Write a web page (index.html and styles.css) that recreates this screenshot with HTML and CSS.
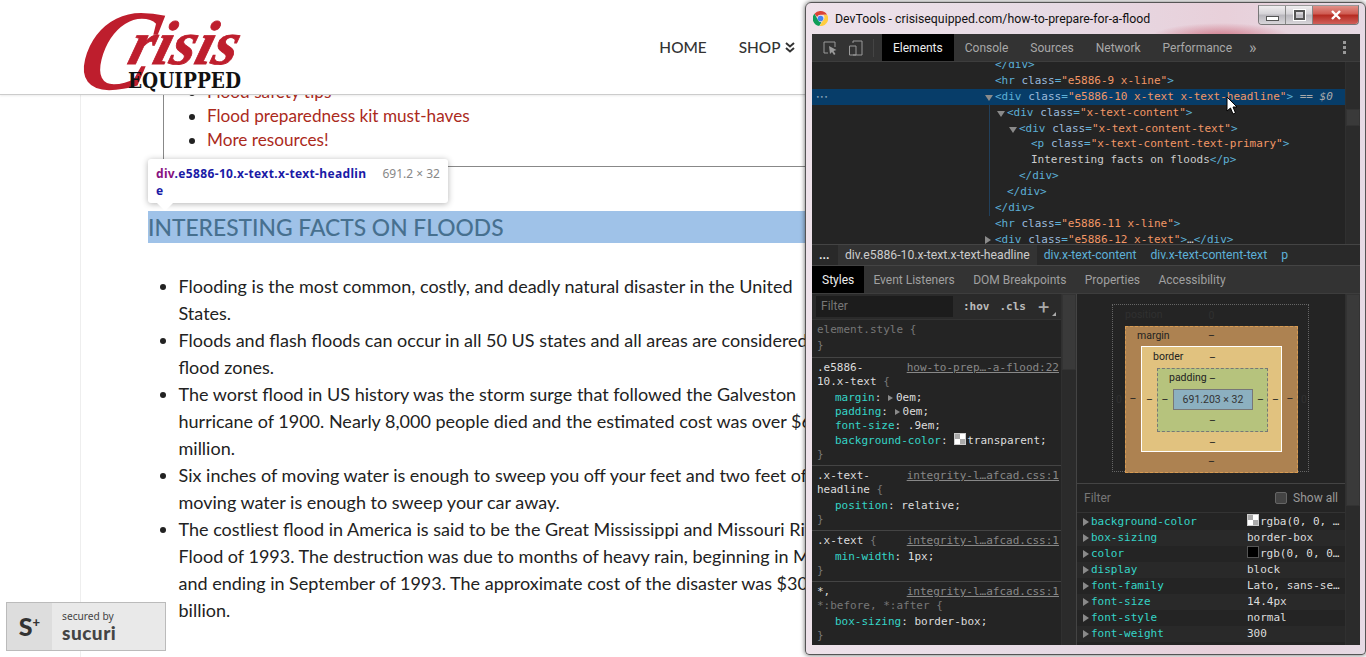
FILE: index.html
```html
<!DOCTYPE html>
<html lang="en">
<head>
  <meta charset="UTF-8">
  <title>How to prepare for a flood</title>
  <link rel="stylesheet" href="styles.css">
</head>
<body>

  <header class="site-header">
    <svg class="logo" viewBox="0 0 157 78" width="157" height="78" role="img" aria-label="Crisis Equipped">
      <text class="logo-c" transform="translate(-10 76) skewX(-14)" textLength="72" lengthAdjust="spacingAndGlyphs">C</text>
      <text class="logo-risis" transform="translate(42 51) skewX(-16)" textLength="108" lengthAdjust="spacingAndGlyphs">risis</text>
      <text class="logo-equipped" x="44" y="75" textLength="113" lengthAdjust="spacingAndGlyphs">EQUIPPED</text>
    </svg>
    <nav class="site-nav">
      <a href="#">HOME</a>
      <a href="#">SHOP
        <svg class="nav-chevrons" viewBox="0 0 10 11" width="10" height="11"><path d="M1 1l4 3.500L9 1M1 6l4 3.500L9 6" fill="none" stroke="#333" stroke-width="2"/></svg>
      </a>
    </nav>
  </header>

  <main class="page">
    <div class="toc">
      <ul>
        <li><a href="#">Flood safety tips</a></li>
        <li><a href="#">Flood preparedness kit must-haves</a></li>
        <li><a href="#">More resources!</a></li>
      </ul>
    </div>
    <h2 class="headline">Interesting facts on floods</h2>
    <ul class="facts">
      <li>Flooding is the most common, costly, and deadly natural disaster in the United States.</li>
      <li>Floods and flash floods can occur in all 50 US states and all areas are considered flood zones.</li>
      <li>The worst flood in US history was the storm surge that followed the Galveston hurricane of 1900. Nearly 8,000 people died and the estimated cost was over $6 million.</li>
      <li>Six inches of moving water is enough to sweep you off your feet and two feet of moving water is enough to sweep your car away.</li>
      <li>The costliest flood in America is said to be the Great Mississippi and Missouri River Flood of 1993. The destruction was due to months of heavy rain, beginning in May and ending in September of 1993. The approximate cost of the disaster was $30 billion.</li>
    </ul>
  </main>

  <div class="inspect-tip">
    <div class="tip-name"><span class="tip-tag">div</span>.e5886-10.x-text.x-text-headlin<br>e</div>
    <div class="tip-size">691.2 × 32</div>
  </div>

  <aside class="sucuri">
    <div class="sucuri-mark">S<sup>+</sup></div>
    <div class="sucuri-text">
      <span>secured by</span>
      <strong>sucuri</strong>
    </div>
  </aside>

  <section class="devtools">
    <div class="titlebar">
      <svg class="chrome-icon" viewBox="0 0 16 16" width="15" height="15">
        <path d="M8 0a8 8 0 0 1 7 4H8a4 4 0 0 0-3.700 2.400L1.600 2.900A8 8 0 0 1 8 0z" fill="#db4437"/>
        <path d="M1.600 2.900l3.600 6.300a3.800 3.800 0 0 0 3.800 2.700L6.600 16A8 8 0 0 1 1.600 2.900z" fill="#0f9d58"/>
        <path d="M15 4a8 8 0 0 1-8 12l3.600-5.800A4 4 0 0 0 11 4z" fill="#ffcd40"/>
        <circle cx="8" cy="8" r="3" fill="#4285f4"/>
      </svg>
      <span class="title-text">DevTools - crisisequipped.com/how-to-prepare-for-a-flood</span>
      <div class="win-buttons">
        <div class="win-btn"><span class="glyph-min"></span></div>
        <div class="win-btn"><span class="glyph-max"></span></div>
        <div class="win-btn win-close">
          <svg viewBox="0 0 12 10" width="12" height="10"><path d="M2 1l8 8M10 1L2 9" stroke="#fff" stroke-width="2.400"/></svg>
        </div>
      </div>
    </div>

    <div class="dt-panel">
      <div class="dt-toolbar">
        <svg class="tool-icon" viewBox="0 0 16 16" width="16" height="16">
          <path d="M6 13H2V2h11v5" fill="none" stroke="#9a9a9a" stroke-width="1"/>
          <path d="M7 6l7.500 4-3 1 2 3-1.500 1-2-3-2 2z" fill="#9a9a9a"/>
        </svg>
        <svg class="tool-icon" viewBox="0 0 16 16" width="16" height="16">
          <path d="M5 3V1h9v14H5M1.500 6h6.500v9H1.500z" fill="none" stroke="#9a9a9a" stroke-width="1"/>
        </svg>
        <div class="toolbar-sep"></div>
        <a class="dt-tab active">Elements</a>
        <a class="dt-tab">Console</a>
        <a class="dt-tab">Sources</a>
        <a class="dt-tab">Network</a>
        <a class="dt-tab">Performance</a>
        <span class="more-tabs">»</span>
        <div class="kebab"><i></i><i></i><i></i></div>
      </div>

      <div class="elements">
        <div class="dom-tree">
          <div class="dom-row in-0"><span class="t">&lt;/div&gt;</span></div>
          <div class="dom-row in-0"><span class="t">&lt;hr</span> <span class="a">class</span><span class="t">=</span><span class="v">"e5886-9 x-line"</span><span class="t">&gt;</span></div>
          <div class="dom-row in-0 selected"><span class="dots">•••</span><span class="tri open"></span><span class="t">&lt;div</span> <span class="a">class</span><span class="t">=</span><span class="v">"e5886-10 x-text x-text-headline"</span><span class="t">&gt;</span> <em class="dollar">== $0</em></div>
          <div class="dom-row in-1"><span class="tri open"></span><span class="t">&lt;div</span> <span class="a">class</span><span class="t">=</span><span class="v">"x-text-content"</span><span class="t">&gt;</span></div>
          <div class="dom-row in-2"><span class="tri open"></span><span class="t">&lt;div</span> <span class="a">class</span><span class="t">=</span><span class="v">"x-text-content-text"</span><span class="t">&gt;</span></div>
          <div class="dom-row in-3"><span class="t">&lt;p</span> <span class="a">class</span><span class="t">=</span><span class="v">"x-text-content-text-primary"</span><span class="t">&gt;</span></div>
          <div class="dom-row in-3">Interesting facts on floods<span class="t">&lt;/p&gt;</span></div>
          <div class="dom-row in-2"><span class="t">&lt;/div&gt;</span></div>
          <div class="dom-row in-1"><span class="t">&lt;/div&gt;</span></div>
          <div class="dom-row in-0"><span class="t">&lt;/div&gt;</span></div>
          <div class="dom-row in-0"><span class="t">&lt;hr</span> <span class="a">class</span><span class="t">=</span><span class="v">"e5886-11 x-line"</span><span class="t">&gt;</span></div>
          <div class="dom-row in-0"><span class="tri"></span><span class="t">&lt;div</span> <span class="a">class</span><span class="t">=</span><span class="v">"e5886-12 x-text"</span><span class="t">&gt;</span>…<span class="t">&lt;/div&gt;</span></div>
          <div class="guide"></div>
        </div>
        <div class="scrollbar"><div class="thumb thumb-dom"></div></div>
      </div>

      <div class="crumbs">
        <span class="crumb-more">...</span>
        <span class="crumb current">div.e5886-10.x-text.x-text-headline</span>
        <span class="crumb">div.x-text-content</span>
        <span class="crumb">div.x-text-content-text</span>
        <span class="crumb">p</span>
      </div>

      <div class="sub-tabs">
        <a class="sub-tab active">Styles</a>
        <a class="sub-tab">Event Listeners</a>
        <a class="sub-tab">DOM Breakpoints</a>
        <a class="sub-tab">Properties</a>
        <a class="sub-tab">Accessibility</a>
      </div>

      <div class="panes">
        <div class="styles-pane">
          <div class="styles-main">
            <div class="styles-filter">
              <div class="filter-input">Filter</div>
              <span class="filter-btn">:hov</span>
              <span class="filter-btn">.cls</span>
              <span class="filter-plus">+</span>
            </div>
            <div class="rule rule-first">
              <div class="sel dim">element.style {</div>
              <div class="dim">}</div>
            </div>
            <div class="rule">
              <div class="sel"><a class="src">how-to-prep…-a-flood:22</a>.e5886-<br>10.x-text <span class="dim">{</span></div>
              <div class="decl"><span class="p">margin</span>: <span class="tri small"></span>0em;</div>
              <div class="decl"><span class="p">padding</span>: <span class="tri small"></span>0em;</div>
              <div class="decl"><span class="p">font-size</span>: .9em;</div>
              <div class="decl"><span class="p">background-color</span>: <span class="swatch checker"></span>transparent;</div>
              <div class="dim">}</div>
            </div>
            <div class="rule">
              <div class="sel"><a class="src">integrity-l…afcad.css:1</a>.x-text-<br>headline <span class="dim">{</span></div>
              <div class="decl"><span class="p">position</span>: relative;</div>
              <div class="dim">}</div>
            </div>
            <div class="rule">
              <div class="sel"><a class="src">integrity-l…afcad.css:1</a>.x-text <span class="dim">{</span></div>
              <div class="decl"><span class="p">min-width</span>: 1px;</div>
              <div class="dim">}</div>
            </div>
            <div class="rule">
              <div class="sel"><a class="src">integrity-l…afcad.css:1</a>*,<br><span class="dim">*:before, *:after {</span></div>
              <div class="decl"><span class="p">box-sizing</span>: border-box;</div>
              <div class="dim">}</div>
            </div>
          </div>
          <div class="scrollbar"><div class="thumb thumb-styles"></div></div>
        </div>

        <div class="computed-pane">
          <div class="computed-main">
            <div class="box-area">
              <div class="bm bm-position">
                <span class="bm-label">position</span><span class="top">0</span>
                <span class="left">0</span>
                <div class="bm bm-margin">
                  <span class="bm-label">margin</span><span class="top">–</span>
                  <span class="left">–</span>
                  <div class="bm bm-border">
                    <span class="bm-label">border</span><span class="top">–</span>
                    <span class="left">–</span>
                    <div class="bm bm-padding">
                      <span class="bm-label">padding</span><span class="top">–</span>
                      <span class="left">–</span>
                      <div class="bm-content">691.203 × 32</div>
                      <span class="right">–</span>
                      <span class="bottom">–</span>
                    </div>
                    <span class="right">–</span>
                    <span class="bottom">–</span>
                  </div>
                  <span class="right">–</span>
                  <span class="bottom">–</span>
                </div>
                <span class="right">0</span>
              </div>
            </div>
            <div class="computed-filter">
              <span class="computed-filter-label">Filter</span>
              <span class="checkbox"></span>
              <span class="show-all">Show all</span>
            </div>
            <div class="computed-list">
              <div class="c-row"><span class="c-name"><span class="tri"></span>background-color</span><span class="c-val"><span class="swatch checker"></span>rgba(0, 0, …</span></div>
              <div class="c-row"><span class="c-name"><span class="tri"></span>box-sizing</span><span class="c-val">border-box</span></div>
              <div class="c-row"><span class="c-name"><span class="tri"></span>color</span><span class="c-val"><span class="swatch black"></span>rgb(0, 0, 0…</span></div>
              <div class="c-row"><span class="c-name"><span class="tri"></span>display</span><span class="c-val">block</span></div>
              <div class="c-row"><span class="c-name"><span class="tri"></span>font-family</span><span class="c-val">Lato, sans-se…</span></div>
              <div class="c-row"><span class="c-name"><span class="tri"></span>font-size</span><span class="c-val">14.4px</span></div>
              <div class="c-row"><span class="c-name"><span class="tri"></span>font-style</span><span class="c-val">normal</span></div>
              <div class="c-row"><span class="c-name"><span class="tri"></span>font-weight</span><span class="c-val">300</span></div>
              <div class="c-row"><span class="c-name"><span class="tri"></span>height</span><span class="c-val">32px</span></div>
            </div>
          </div>
          <div class="scrollbar"><div class="thumb thumb-computed"></div></div>
        </div>
      </div>
    </div>

    <svg class="cursor" viewBox="0 0 12 19" width="12" height="19">
      <path d="M1 1v14l3.500-3 2.500 6 2.500-1-2.500-6H11z" fill="#fff" stroke="#000" stroke-width="1"/>
    </svg>
  </section>

</body>
</html>
```

FILE: styles.css
```css
html, body {
  margin: 0;
  padding: 0;
  height: 657px;
  overflow: hidden;
  background: #fff;
}

body {
  font-family: Lato, sans-serif;
  color: #222;
}

/* site header */
.site-header {
  position: absolute;
  top: 0;
  left: 0;
  right: 0;
  height: 95px;
  box-sizing: border-box;
  padding: 13px 571px 0 84px;
  display: flex;
  justify-content: space-between;
  align-items: flex-start;
  background: #fff;
  border-bottom: 1px solid #ccc;
  box-shadow: 0 1px 2px rgba(0, 0, 0, 0.08);
  z-index: 2;
}

.logo {
  display: block;
  overflow: visible;
}

.logo-c {
  font: italic bold 115px "Liberation Serif", serif;
  fill: #be1e2d;
}

.logo-risis {
  font: italic bold 62px "Liberation Serif", serif;
  fill: #be1e2d;
  stroke: #be1e2d;
  stroke-width: 0.8px;
}

.logo-equipped {
  font: bold 22px "DejaVu Serif", serif;
  fill: #111;
}

.site-nav {
  display: flex;
  gap: 32px;
  padding-top: 25px;
  font-size: 15.400px;
  font-weight: 500;
  line-height: 18px;
}

.site-nav a {
  color: #333;
  text-decoration: none;
  white-space: nowrap;
}

.nav-chevrons {
  margin-left: 1px;
}

/* article */
.page {
  margin-left: 80px;
  height: 657px;
  box-sizing: border-box;
  padding: 80px 0 0 67px;
  border-left: 1px solid #eee;
  width: 760px;
  font-size: 18px;
}

.toc {
  margin-left: 15px;
  height: 86px;
  border-left: 1px solid #888;
  border-bottom: 1px solid #888;
}

.toc ul {
  margin: 0;
  padding-left: 43px;
  line-height: 24px;
  font-size: 17.200px;
}

.toc a {
  color: #ab2a1c;
  text-decoration: none;
}

.headline {
  margin: 44px 0 0;
  height: 32px;
  line-height: 32px;
  font-size: 22.800px;
  font-weight: 500;
  text-transform: uppercase;
  color: #47708f;
  background: #9fc2e8;
}

.facts {
  margin: 30px 0 0;
  padding-left: 30.500px;
  line-height: 27px;
  color: #222;
  width: 660.500px;
}

/* element highlight tooltip */
.inspect-tip {
  position: absolute;
  left: 148px;
  top: 159px;
  width: 300px;
  height: 44px;
  box-sizing: border-box;
  padding: 6px 8px;
  display: flex;
  justify-content: space-between;
  background: #fff;
  border-radius: 3px;
  box-shadow: 0 1px 6px rgba(0, 0, 0, 0.3);
  font: 12px/17px "Noto Sans", sans-serif;
  z-index: 1;
}

.inspect-tip::after {
  content: "";
  position: absolute;
  left: 9px;
  top: 44px;
  border-left: 8px solid transparent;
  border-right: 8px solid transparent;
  border-top: 8px solid #fff;
}

.tip-name {
  font-weight: 700;
  color: #1a1aa6;
  letter-spacing: 0.350px;
  white-space: nowrap;
}

.tip-tag {
  color: #881280;
}

.tip-size {
  color: #888;
}

/* sucuri badge */
.sucuri {
  position: absolute;
  left: 6px;
  top: 602px;
  width: 160px;
  height: 49px;
  box-sizing: border-box;
  display: flex;
  background: #e9e9e9;
  border: 1px solid #bbb;
  z-index: 1;
}

.sucuri-mark {
  width: 45px;
  background: #ddd;
  font: 900 25px/47px Lato, sans-serif;
  color: #333;
  text-align: center;
}

.sucuri-mark sup {
  font-size: 13px;
  line-height: 0;
  vertical-align: 9px;
}

.sucuri-text {
  padding: 6px 0 0 10px;
  display: flex;
  flex-direction: column;
  color: #444;
}

.sucuri-text span {
  font: 10.200px/14px "Noto Sans", sans-serif;
}

.sucuri-text strong {
  font: 900 19px/20px Lato, sans-serif;
  letter-spacing: 0.500px;
}

/* devtools window */
.devtools {
  position: absolute;
  left: 805px;
  top: 2px;
  width: 561px;
  height: 653px;
  box-sizing: border-box;
  padding: 31px 5px 9px 6px;
  display: flex;
  flex-direction: column;
  border: 1px solid #555;
  border-radius: 6px 6px 4px 4px;
  background:
    radial-gradient(ellipse 70px 14px at 415px 34px, rgba(190, 60, 80, 0.6), transparent),
    linear-gradient(90deg, #eee2ea 0%, #e6dae4 45%, #e8d0da 75%, #e6dae4 100%);
  box-shadow: 0 0 5px rgba(0, 0, 0, 0.6);
  z-index: 3;
  font: 12px Roboto, sans-serif;
}

.titlebar {
  position: absolute;
  left: 0;
  right: 0;
  top: 0;
  height: 31px;
  display: flex;
  align-items: center;
  padding-left: 7px;
}

.chrome-icon {
  margin: 0 7px 0 0;
}

.title-text {
  color: #111;
  font-size: 12.300px;
  white-space: nowrap;
}

.win-buttons {
  position: absolute;
  right: 6px;
  top: 2px;
  display: flex;
  border: 1px solid #777;
  border-top: 1px solid #999;
  border-radius: 0 0 4px 4px;
  overflow: hidden;
}

.win-btn {
  width: 27px;
  height: 18px;
  display: flex;
  align-items: center;
  justify-content: center;
  background: linear-gradient(#f0eef0, #d4d2d6 45%, #b8b6bc 50%, #d8d6da);
  border-right: 1px solid #888;
  box-sizing: border-box;
}

.win-close {
  width: 45px;
  border-right: 0;
  background: linear-gradient(#e09088, #cf5a50 45%, #b52a20 50%, #d0605a);
}

.glyph-min {
  width: 11px;
  height: 3px;
  margin-top: 6px;
  background: #fff;
  border: 1px solid #555;
}

.glyph-max {
  width: 7px;
  height: 6px;
  border: 2px solid #555;
  outline: 1px solid #fff;
}

.dt-panel {
  flex: 1;
  min-height: 0;
  display: flex;
  flex-direction: column;
  background: #242424;
  color: #ccc;
  overflow: hidden;
}

.dt-toolbar {
  height: 28px;
  flex: none;
  display: flex;
  align-items: center;
  background: #333;
  border-bottom: 1px solid #3d3d3d;
  box-sizing: border-box;
}

.tool-icon {
  margin-left: 10px;
  flex: none;
}

.tool-icon + .tool-icon {
  margin-left: 10px;
}

.toolbar-sep {
  width: 1px;
  height: 18px;
  margin: 0 8px 0 9px;
  background: #444;
}

.dt-tab {
  height: 27px;
  line-height: 29px;
  padding: 0 11px;
  color: #a8a8a8;
}

.dt-tab.active {
  background: #000;
  color: #eee;
  padding: 0 11px;
}

.more-tabs {
  margin-left: 6px;
  color: #aaa;
  font-size: 16px;
  line-height: 22px;
}

.kebab {
  margin-left: auto;
  margin-right: 14px;
  display: flex;
  flex-direction: column;
  gap: 2px;
}

.kebab i {
  display: block;
  width: 3px;
  height: 3px;
  background: #999;
}

.elements {
  flex: none;
  height: 182px;
  display: flex;
  overflow: hidden;
}

.dom-tree {
  flex: 1;
  position: relative;
  margin-top: -5px;
  font: 11px/15.900px "DejaVu Sans Mono", monospace;
  color: #ccc;
}

.dom-row {
  position: relative;
  height: 15.900px;
  white-space: pre;
}

.dom-row.selected {
  background: #073d69;
}

.in-0 { padding-left: 183px; }
.in-1 { padding-left: 195px; }
.in-2 { padding-left: 207px; }
.in-3 { padding-left: 219px; }

.dots {
  position: absolute;
  left: 4px;
  top: 0;
  font-size: 6px;
  color: #8fa8bd;
  letter-spacing: 0.500px;
}

.t { color: #5db0d7; }
.a { color: #9bbbdc; }
.v { color: #f29766; }

.dollar {
  color: #aaa;
}

.guide {
  position: absolute;
  left: 177px;
  top: 48px;
  width: 1px;
  height: 111px;
  background: #21405c;
}

.tri {
  position: absolute;
  margin-left: -10px;
  margin-top: 4px;
  border-top: 4px solid transparent;
  border-bottom: 4px solid transparent;
  border-left: 6px solid #8a8a8a;
}

.tri.open {
  margin-top: 6px;
  border-left: 4px solid transparent;
  border-right: 4px solid transparent;
  border-top: 6px solid #8a8a8a;
  border-bottom: 0;
}

.tri.small {
  position: static;
  display: inline-block;
  margin: 0 3px 0 0;
  border-top-width: 3.500px;
  border-bottom-width: 3.500px;
  border-left-width: 5px;
}

.scrollbar {
  flex: none;
  width: 15px;
  background: #2b2b2b;
  border-left: 1px solid #303030;
  box-sizing: border-box;
}

.thumb {
  background: #3a3a3a;
  border: 1px solid #333;
  box-sizing: border-box;
}

.thumb-dom { height: 17px; margin-top: 47px; }
.thumb-styles { height: 76px; }
.thumb-computed { height: 212px; }

.crumbs {
  flex: none;
  height: 22px;
  display: flex;
  align-items: center;
  background: #292929;
  border-top: 1px solid #444;
  border-bottom: 1px solid #444;
  box-sizing: border-box;
  color: #5db0d7;
  font-size: 12.200px;
  line-height: 20px;
  white-space: nowrap;
}

.crumb-more {
  width: 26px;
  padding-left: 7px;
  box-sizing: border-box;
  color: #eee;
  font-weight: 700;
}

.crumb {
  padding: 0 7px;
}

.crumb.current {
  background: #333;
  color: #ccc;
}

.sub-tabs {
  flex: none;
  height: 28px;
  display: flex;
  background: #333;
  border-bottom: 1px solid #3d3d3d;
  box-sizing: border-box;
}

.sub-tab {
  line-height: 29px;
  padding: 0 9.200px;
  color: #a0a0a0;
}

.sub-tab.active {
  background: #000;
  color: #eee;
  padding: 0 10px;
}

.panes {
  flex: 1;
  min-height: 0;
  display: flex;
}

.styles-pane {
  width: 264px;
  display: flex;
  overflow: hidden;
  border-right: 1px solid #444;
  box-sizing: content-box;
}

.styles-main {
  flex: 1;
  min-width: 0;
  font: 11px/14px "DejaVu Sans Mono", monospace;
  color: #ddd;
}

.styles-filter {
  height: 26px;
  display: flex;
  align-items: center;
  background: #2a2a2a;
  border-bottom: 1px solid #333;
  box-sizing: border-box;
  padding-left: 4px;
}

.filter-input {
  width: 137px;
  height: 21px;
  padding-left: 5px;
  box-sizing: border-box;
  background: #1c1c1c;
  color: #777;
  font: 12px/21px Roboto, sans-serif;
}

.filter-btn {
  margin-left: 10px;
  color: #bbb;
  font-weight: 700;
}

.filter-plus {
  position: relative;
  margin-left: 12px;
  color: #aaa;
  font: 20px/20px Roboto, sans-serif;
}

.filter-plus::after {
  content: "";
  position: absolute;
  left: 14px;
  top: 15px;
  border-left: 4px solid transparent;
  border-bottom: 4px solid #aaa;
}

.rule {
  padding: 3px 2px 3px 5px;
  border-bottom: 1px solid #444;
}

.rule-first {
  padding-bottom: 4px;
}

.sel {
  margin-bottom: 2px;
}

.decl {
  padding-left: 18px;
  white-space: nowrap;
}

.dim {
  color: #777;
}

.p {
  color: #35d4c7;
}

.src {
  float: right;
  color: #888;
  text-decoration: underline;
}

.swatch {
  display: inline-block;
  width: 10px;
  height: 10px;
  margin-right: 1px;
  border: 1px solid #ccc;
  vertical-align: -1px;
}

.swatch.checker {
  background: conic-gradient(#fff 25%, #aaa 0 50%, #fff 0 75%, #aaa 0);
  background-size: 10px 10px;
}

.swatch.black {
  background: #000;
  border-color: #555;
}

.computed-pane {
  position: relative;
  flex: 1;
  min-width: 0;
  display: flex;
  overflow: hidden;
}

.computed-main {
  flex: 1;
  min-width: 0;
}

.box-area {
  height: 190px;
  box-sizing: border-box;
  padding: 10px 0 0 35px;
  border-bottom: 1px solid #444;
  font: 10.500px/14px Roboto, sans-serif;
}

.bm {
  position: relative;
  display: grid;
  box-sizing: border-box;
  color: #222;
  text-align: center;
}

.bm > span {
  align-self: center;
}

.bm > .top,
.bm > .bottom {
  grid-column: 1 / 4;
}

.bm-label {
  position: absolute;
  left: 12px;
  top: 3px;
}

.bm-position {
  width: 197px;
  height: 168px;
  grid-template-columns: 12px 173px 12px;
  grid-template-rows: 21px 147px;
  border: 1px dotted #666;
  color: #303030;
}

.bm-margin {
  grid-template-columns: 16px 141px 16px;
  grid-template-rows: 20px 106px 20px;
  background: #ad8251;
  outline: 1px dashed #d89b52;
  outline-offset: -1px;
}

.bm-border {
  grid-template-columns: 15px 111px 15px;
  grid-template-rows: 21px 64px 21px;
  background: #e1c27f;
  border: 1px solid #fff;
}

.bm-padding {
  grid-template-columns: 16px 80px 15px;
  grid-template-rows: 21px 21px 22px;
  background: #b6c37d;
  outline: 1px dashed #777;
  outline-offset: -1px;
}

.bm-border > .bm-label { left: 11px; }
.bm-padding > .bm-label { left: 12px; }

.bm-content {
  background: #8cb0c0;
  border: 1px solid #777;
  box-sizing: border-box;
  line-height: 19px;
  color: #333;
  white-space: nowrap;
}

.computed-filter {
  height: 29px;
  display: flex;
  align-items: center;
  border-bottom: 1px solid #333;
  box-sizing: border-box;
  padding-left: 7px;
  color: #777;
}

.show-all {
  margin-right: 7px;
  color: #999;
}

.checkbox {
  width: 10px;
  height: 10px;
  margin-left: auto;
  margin-right: 6px;
  background: #444;
  border: 1px solid #666;
  border-radius: 2px;
}

.computed-list {
  font: 11px/16px "DejaVu Sans Mono", monospace;
  padding-top: 1px;
}

.c-row {
  display: flex;
  height: 16px;
  white-space: nowrap;
  overflow: hidden;
}

.c-row:nth-child(even) {
  background: #292929;
}

.c-name {
  width: 170px;
  flex: none;
  padding-left: 14px;
  box-sizing: border-box;
  color: #35d4c7;
}

.c-name .tri {
  margin-left: -8px;
}

.c-val {
  color: #ddd;
}

.cursor {
  position: absolute;
  left: 420px;
  top: 93px;
}
```
